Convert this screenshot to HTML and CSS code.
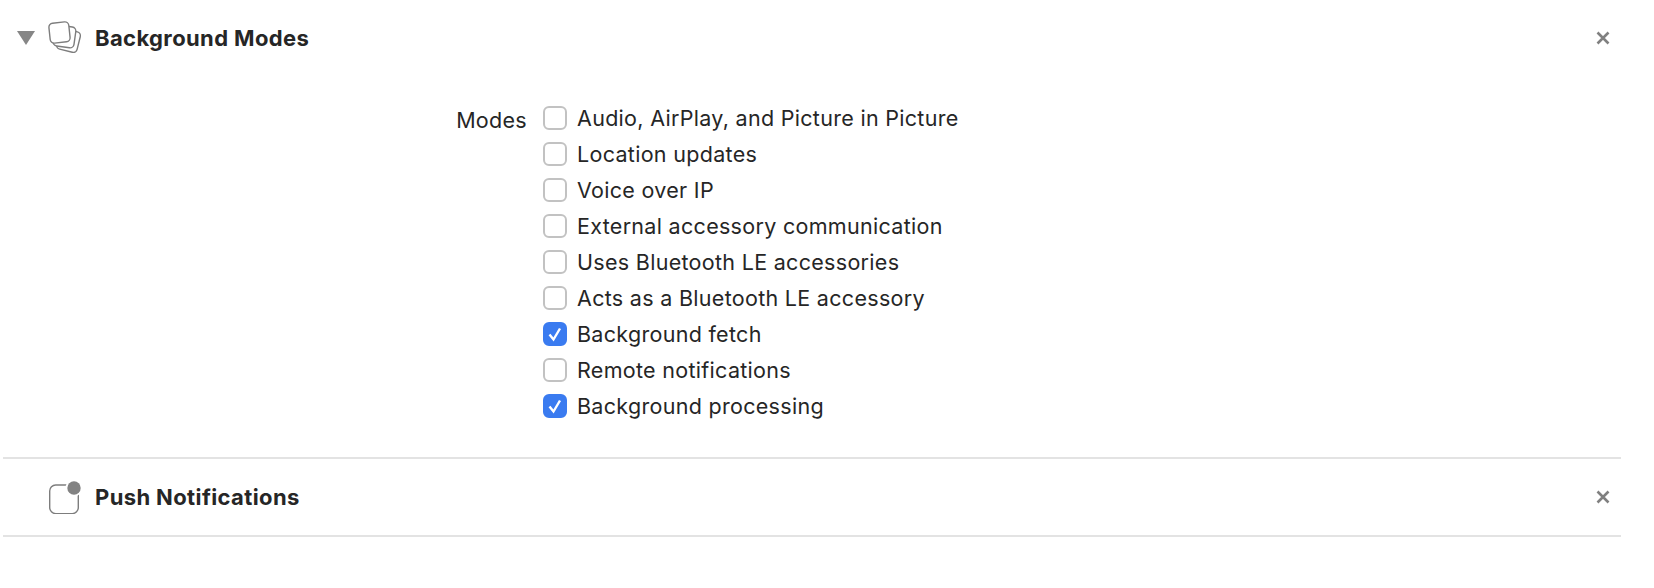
FILE: index.html
```html
<!DOCTYPE html>
<html lang="en">
<head>
    <meta charset="UTF-8">
    <title>Capabilities</title>
    <link rel="stylesheet" href="styles.css">
</head>
<body>
    <div class="capabilities">
        <section class="capability capability-open">
            <div class="capability-header">
                <svg class="disclosure" width="20" height="16" viewBox="0 0 20 16"><path d="M1 1H19L10 15Z" fill="#868686"/></svg>
                <svg class="capability-icon" width="34" height="34" viewBox="0 0 34 34" fill="#fff" stroke="#7d7d7d" stroke-width="1.4">
                    <rect x="10" y="9" width="21" height="21" rx="4" transform="rotate(14 20.5 19.5)"/>
                    <rect x="6" y="5" width="21" height="21" rx="4" transform="rotate(8 16.500 15.500)"/>
                    <rect x="1.500" y="1.500" width="20" height="20" rx="4" transform="rotate(-6 11.500 11.500)"/>
                </svg>
                <h2 class="capability-title">Background Modes</h2>
                <svg class="remove" width="14" height="14" viewBox="0 0 14 14"><path d="M1.500 1.500L12.500 12.500M12.500 1.500L1.500 12.500" stroke="#808080" stroke-width="2.600"/></svg>
            </div>
            <div class="modes">
                <div class="modes-label">Modes</div>
                <div class="modes-list">
                    <label class="mode"><span class="check"></span>Audio, AirPlay, and Picture in Picture</label>
                    <label class="mode"><span class="check"></span>Location updates</label>
                    <label class="mode"><span class="check"></span>Voice over IP</label>
                    <label class="mode"><span class="check"></span>External accessory communication</label>
                    <label class="mode"><span class="check"></span>Uses Bluetooth LE accessories</label>
                    <label class="mode"><span class="check"></span>Acts as a Bluetooth LE accessory</label>
                    <label class="mode"><span class="check check-on"><svg width="16" height="16" viewBox="0 0 16 16"><path d="M2.500 8.500L6.500 13.500L13 2.500" fill="none" stroke="#fff" stroke-width="2.400"/></svg></span>Background fetch</label>
                    <label class="mode"><span class="check"></span>Remote notifications</label>
                    <label class="mode"><span class="check check-on"><svg width="16" height="16" viewBox="0 0 16 16"><path d="M2.500 8.500L6.500 13.500L13 2.500" fill="none" stroke="#fff" stroke-width="2.400"/></svg></span>Background processing</label>
                </div>
            </div>
        </section>
        <section class="capability">
            <div class="capability-header">
                <span class="disclosure-space"></span>
                <svg class="capability-icon" width="34" height="34" viewBox="0 0 34 34">
                    <rect x="1.700" y="5" width="28.600" height="28.600" rx="6" fill="#fff" stroke="#7d7d7d" stroke-width="1.400"/>
                    <circle cx="26" cy="8" r="8.500" fill="#fff"/>
                    <circle cx="26" cy="8" r="6.700" fill="#828282"/>
                </svg>
                <h2 class="capability-title">Push Notifications</h2>
                <svg class="remove" width="14" height="14" viewBox="0 0 14 14"><path d="M1.500 1.500L12.500 12.500M12.500 1.500L1.500 12.500" stroke="#808080" stroke-width="2.600"/></svg>
            </div>
        </section>
    </div>
</body>
</html>
```

FILE: styles.css
```css
body {
    margin: 0;
    background: #fff;
    color: #262626;
    font-family: Inter, "Liberation Sans", sans-serif;
    font-size: 21.5px;
    letter-spacing: 0.3px;
}

.capabilities {
    width: 1618px;
    margin-left: 3px;
}

.capability {
    border-bottom: 2px solid #e3e3e3;
}

.capability-open {
    height: 457px;
}

.capability-header {
    display: flex;
    align-items: center;
    height: 76px;
    padding-left: 13px;
}

.disclosure {
    flex-shrink: 0;
    margin-right: 12px;
}

.disclosure-space {
    width: 32px;
    flex-shrink: 0;
}

.capability-icon {
    flex-shrink: 0;
    margin-right: 13px;
}

.capability-title {
    flex: 1;
    margin: 0;
    font-size: 22px;
    font-weight: 700;
    letter-spacing: 0.38px;
}

.remove {
    margin-right: 11px;
}

.modes {
    display: flex;
    padding-top: 24px;
}

.modes-label {
    width: 524px;
    text-align: right;
    line-height: 36px;
    margin-top: 2px;
}

.modes-list {
    margin-left: 16px;
}

.mode {
    display: flex;
    align-items: center;
    height: 36px;
}

.check {
    display: flex;
    align-items: center;
    justify-content: center;
    box-sizing: border-box;
    width: 24px;
    height: 24px;
    margin-right: 10px;
    background: #fff;
    border: 2px solid #c2c2c2;
    border-radius: 6px;
}

.check-on {
    background: #3a7bf0;
    border-color: #3a7bf0;
}
```
